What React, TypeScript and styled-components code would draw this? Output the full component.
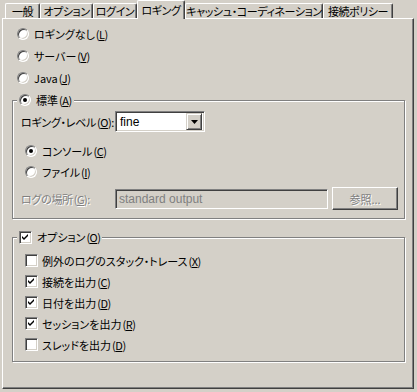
import styled, { createGlobalStyle } from 'styled-components';

const GlobalStyle = createGlobalStyle`
  html, body {
    margin: 0;
    padding: 0;
    background: #d4d0c8;
  }
  body {
    font-family: "Noto Sans CJK JP", "Liberation Sans", sans-serif;
    font-size: 11px;
    line-height: 14px;
    color: #000;
    font-feature-settings: "palt";
  }
`;

const tabs = [
  { label: '一般', width: 35 },
  { label: 'オプション', width: 53 },
  { label: 'ログイン', width: 44 },
  { label: 'ロギング', width: 48, active: true },
  { label: 'キャッシュ・コーディネーション', width: 138 },
  { label: '接続ポリシー', width: 70 },
];

const modes = [
  { label: 'ロギングなし', key: 'L' },
  { label: 'サーバー', key: 'V' },
  { label: 'Java', key: 'J' },
];

const options = [
  { label: '例外のログのスタック・トレース', key: 'X', checked: false },
  { label: '接続を出力', key: 'C', checked: true },
  { label: '日付を出力', key: 'D', checked: true },
  { label: 'セッションを出力', key: 'R', checked: true },
  { label: 'スレッドを出力', key: 'D', checked: false },
];

const Mn = ({ k }: { k: string }) => (
  <StyledMn>
    (<u>{k}</u>)
  </StyledMn>
);

const CheckMark = () => (
  <svg width="7" height="7" viewBox="0 0 7 7">
    <path d="M0 2 L2 4 L6 0 L6 2 L2 6 L0 4 Z" fill="#000" />
  </svg>
);

const App = () => {
  return (
    <StyledWindow>
      <GlobalStyle />
      <StyledTabStrip>
        {tabs.map((t) => (
          <StyledTab key={t.label} $active={!!t.active} $w={t.width}>
            {t.label}
          </StyledTab>
        ))}
      </StyledTabStrip>
      <StyledPanel>
        <StyledModeList>
          {modes.map((m) => (
            <StyledRow key={m.key} $h={22}>
              <StyledRadio $checked={false} />
              <StyledLabel>
                {m.label}
                <Mn k={m.key} />
              </StyledLabel>
            </StyledRow>
          ))}
        </StyledModeList>

        <StyledGroup $top={11} $h={119}>
          <StyledGroupTitle>
            <StyledRadio $checked />
            <StyledLabel>
              標準
              <Mn k="A" />
            </StyledLabel>
          </StyledGroupTitle>
          <StyledFieldRow>
            <StyledFieldLabel>
              ロギング・レベル
              <Mn k="O" />:
            </StyledFieldLabel>
            <StyledCombo>
              <StyledComboText>fine</StyledComboText>
              <StyledComboButton>
                <svg width="7" height="4" viewBox="0 0 7 4">
                  <path d="M0 0 H7 L3.5 4 Z" fill="#000" />
                </svg>
              </StyledComboButton>
            </StyledCombo>
          </StyledFieldRow>
          <StyledSubList>
            <StyledRow $h={21}>
              <StyledRadio $checked />
              <StyledLabel>
                コンソール
                <Mn k="C" />
              </StyledLabel>
            </StyledRow>
            <StyledRow $h={21}>
              <StyledRadio $checked={false} />
              <StyledLabel>
                ファイル
                <Mn k="I" />
              </StyledLabel>
            </StyledRow>
          </StyledSubList>
          <StyledLocationRow>
            <StyledFieldLabel $disabled>
              ログの場所
              <Mn k="G" />:
            </StyledFieldLabel>
            <StyledTextField>standard output</StyledTextField>
            <StyledButton disabled>参照...</StyledButton>
          </StyledLocationRow>
        </StyledGroup>

        <StyledGroup $top={18} $h={125}>
          <StyledGroupTitle>
            <StyledCheck>
              <CheckMark />
            </StyledCheck>
            <StyledLabel>
              オプション
              <Mn k="O" />
            </StyledLabel>
          </StyledGroupTitle>
          <StyledCheckList>
            {options.map((o) => (
              <StyledRow key={o.label} $h={21}>
                <StyledCheck>{o.checked && <CheckMark />}</StyledCheck>
                <StyledLabel $gap={4}>
                  {o.label}
                  <Mn k={o.key} />
                </StyledLabel>
              </StyledRow>
            ))}
          </StyledCheckList>
        </StyledGroup>
      </StyledPanel>
    </StyledWindow>
  );
};

const StyledWindow = styled.div`
  width: 417px;
  height: 392px;
  box-sizing: border-box;
  padding-left: 2px;
  overflow: hidden;
`;

const StyledTabStrip = styled.div`
  display: flex;
  align-items: flex-end;
  height: 18px;
  padding-left: 3px;
`;

const StyledTab = styled.div<{ $active: boolean; $w: number }>`
  position: relative;
  z-index: ${(p) => (p.$active ? 1 : 0)};
  box-sizing: border-box;
  width: ${(p) => p.$w}px;
  height: ${(p) => (p.$active ? 19 : 15)}px;
  margin-bottom: ${(p) => (p.$active ? -1 : 0)}px;
  padding-top: ${(p) => (p.$active ? 2 : 0)}px;
  background: #d4d0c8;
  border-left: 1px solid #fff;
  border-top: 1px solid #fff;
  border-right: 1px solid #404040;
  border-radius: 2px 2px 0 0;
  box-shadow: inset -1px 0 #808080;
  text-align: center;
  white-space: nowrap;
  letter-spacing: -0.4px;
`;

const StyledPanel = styled.div`
  box-sizing: border-box;
  width: 412px;
  height: 371px;
  padding: 4px 0 0 0;
  border-top: 1px solid #fff;
  border-left: 1px solid #fff;
  border-right: 1px solid #404040;
  border-bottom: 1px solid #404040;
  box-shadow: inset -1px -1px #808080;
`;

const StyledModeList = styled.div`
  display: flex;
  flex-direction: column;
  padding-left: 14px;
`;

const StyledRow = styled.div<{ $h: number }>`
  display: flex;
  align-items: center;
  height: ${(p) => p.$h}px;
`;

const StyledLabel = styled.span<{ $gap?: number }>`
  margin-left: ${(p) => p.$gap ?? 5}px;
  white-space: nowrap;
`;

const StyledMn = styled.span`
  margin-left: 1px;
  letter-spacing: -0.5px;
`;

const StyledRadio = styled.span<{ $checked: boolean }>`
  position: relative;
  flex: none;
  box-sizing: border-box;
  width: 12px;
  height: 12px;
  border-radius: 50%;
  background: #fff;
  border: 1px solid;
  border-color: #808080 #fff #fff #808080;
  box-shadow: inset 1px 1px #404040, inset -1px -1px #d4d0c8;
  &::after {
    content: '';
    display: ${(p) => (p.$checked ? 'block' : 'none')};
    position: absolute;
    left: 3px;
    top: 3px;
    width: 4px;
    height: 4px;
    border-radius: 50%;
    background: #000;
  }
`;

const StyledCheck = styled.span`
  flex: none;
  box-sizing: border-box;
  display: flex;
  align-items: center;
  justify-content: center;
  width: 13px;
  height: 13px;
  background: #fff;
  border: 1px solid;
  border-color: #808080 #fff #fff #808080;
  box-shadow: inset 1px 1px #404040, inset -1px -1px #d4d0c8;
`;

const StyledGroup = styled.div<{ $top: number; $h: number }>`
  position: relative;
  box-sizing: border-box;
  width: 393px;
  height: ${(p) => p.$h}px;
  margin: ${(p) => p.$top}px 0 0 9px;
  border: 1px solid #808080;
  box-shadow: inset 1px 1px #fff, 1px 1px #fff;
`;

const StyledGroupTitle = styled.div`
  position: absolute;
  top: -8px;
  left: 4px;
  display: flex;
  align-items: center;
  height: 14px;
  padding: 0 2px;
  background: #d4d0c8;
`;

const StyledFieldRow = styled.div`
  display: flex;
  align-items: center;
  padding: 10px 0 0 8px;
`;

const StyledFieldLabel = styled.span<{ $disabled?: boolean }>`
  width: 94px;
  white-space: nowrap;
  letter-spacing: -0.3px;
  color: ${(p) => (p.$disabled ? '#808080' : '#000')};
  text-shadow: ${(p) => (p.$disabled ? '1px 1px #fff' : 'none')};
`;

const sunken = `
  box-sizing: border-box;
  border: 1px solid;
  border-color: #808080 #fff #fff #808080;
  box-shadow: inset 1px 1px #404040, inset -1px -1px #d4d0c8;
`;

const StyledCombo = styled.div`
  ${sunken}
  display: flex;
  align-items: center;
  width: 90px;
  height: 21px;
  padding: 2px;
  background: #fff;
`;

const StyledComboText = styled.span`
  flex: 1;
  padding-left: 2px;
  font-family: "Liberation Sans", "Noto Sans CJK JP", sans-serif;
  font-size: 12px;
`;

const StyledComboButton = styled.span`
  box-sizing: border-box;
  display: flex;
  align-items: center;
  justify-content: center;
  width: 16px;
  height: 17px;
  background: #d4d0c8;
  border: 1px solid;
  border-color: #d4d0c8 #404040 #404040 #d4d0c8;
  box-shadow: inset 1px 1px #fff, inset -1px -1px #808080;
`;

const StyledSubList = styled.div`
  display: flex;
  flex-direction: column;
  padding: 8px 0 0 12px;
`;

const StyledLocationRow = styled.div`
  display: flex;
  align-items: center;
  height: 23px;
  padding: 5px 0 0 8px;
`;

const StyledTextField = styled.div`
  ${sunken}
  display: flex;
  align-items: center;
  width: 213px;
  height: 20px;
  padding-left: 3px;
  color: #808080;
  font-family: "Liberation Sans", "Noto Sans CJK JP", sans-serif;
  font-size: 12px;
`;

const StyledButton = styled.button`
  box-sizing: border-box;
  width: 66px;
  height: 23px;
  margin-left: 4px;
  padding: 0;
  font: inherit;
  font-feature-settings: "palt";
  background: #d4d0c8;
  color: #808080;
  text-shadow: 1px 1px #fff;
  border: 1px solid;
  border-color: #fff #404040 #404040 #fff;
  box-shadow: inset -1px -1px #808080;
`;

const StyledCheckList = styled.div`
  display: flex;
  flex-direction: column;
  padding: 12px 0 0 12px;
`;

export default App;
